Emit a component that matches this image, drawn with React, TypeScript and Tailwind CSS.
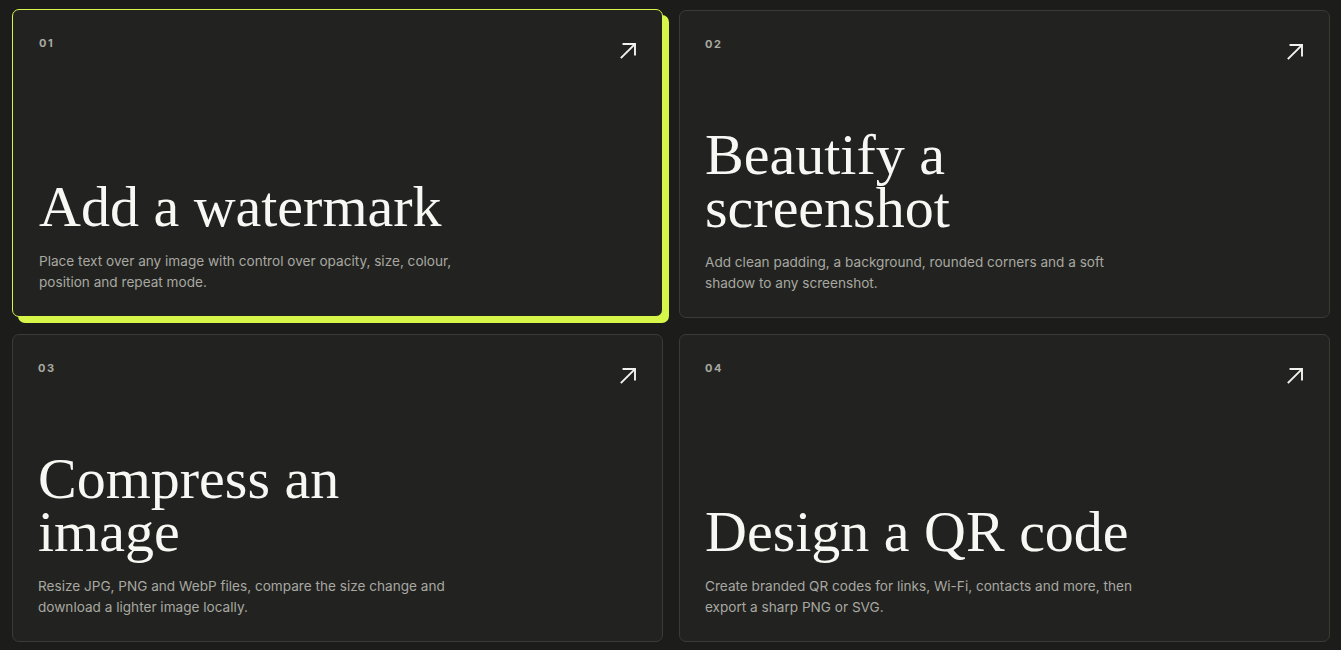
import React from "react";

type Card = { n: string; title: string; desc: string; active?: boolean };

const cards: Card[] = [
  {
    n: "01",
    title: "Add a watermark",
    desc: "Place text over any image with control over opacity, size, colour, position and repeat mode.",
    active: true,
  },
  {
    n: "02",
    title: "Beautify a screenshot",
    desc: "Add clean padding, a background, rounded corners and a soft shadow to any screenshot.",
  },
  {
    n: "03",
    title: "Compress an image",
    desc: "Resize JPG, PNG and WebP files, compare the size change and download a lighter image locally.",
  },
  {
    n: "04",
    title: "Design a QR code",
    desc: "Create branded QR codes for links, Wi-Fi, contacts and more, then export a sharp PNG or SVG.",
  },
];

function Arrow() {
  return (
    <svg width="24" height="24" viewBox="0 0 24 24" fill="none" stroke="#f2f2ee" strokeWidth="1.9" strokeLinecap="square" strokeLinejoin="miter">
      <path d="M7.5 22.5 L20.5 9.5" />
      <path d="M9.5 9 H21 V19.5" />
    </svg>
  );
}

function ToolCard({ c }: { c: Card }) {
  return (
    <a
      href="#"
      className={
        c.active
          ? "flex h-[308px] flex-col justify-between rounded-[7px] border border-[#d6f64a] bg-[#222320] pt-[25px] pb-[23px] pl-[26px] pr-[25px] -translate-y-px shadow-[6px_6px_0_0_#d6f64a]"
          : "flex h-[308px] flex-col justify-between rounded-[7px] border border-[#3a3b37] bg-[#222320] pt-[25px] pb-[23px] px-[25px]"
      }
    >
      <div className="flex items-start justify-between">
        <span
          className="text-[11px] font-bold leading-4 tracking-[0.14em] text-[#a9a9a3]"
          style={{ fontFamily: "Inter, 'Liberation Sans', sans-serif" }}
        >
          {c.n}
        </span>
        <span className="-mr-[1px]">
          <Arrow />
        </span>
      </div>
      <div>
        <h2
          className="max-w-[440px] text-[58px] font-normal leading-[53px] text-[#f7f7f3]"
          style={{ fontFamily: "'Liberation Serif', 'Times New Roman', serif" }}
        >
          {c.title}
        </h2>
        <p
          className="mt-[18px] max-w-[448px] text-[13.6px] leading-[21px] text-[#a8a8a2]"
          style={{ fontFamily: "Inter, 'Liberation Sans', sans-serif" }}
        >
          {c.desc}
        </p>
      </div>
    </a>
  );
}

export default function App() {
  return (
    <div className="min-h-[650px] bg-[#1c1d1a] pl-3 pr-[11px] pt-[10px] pb-4">
      <div className="grid grid-cols-2 gap-4">
        {cards.map((c) => (
          <ToolCard key={c.n} c={c} />
        ))}
      </div>
    </div>
  );
}
